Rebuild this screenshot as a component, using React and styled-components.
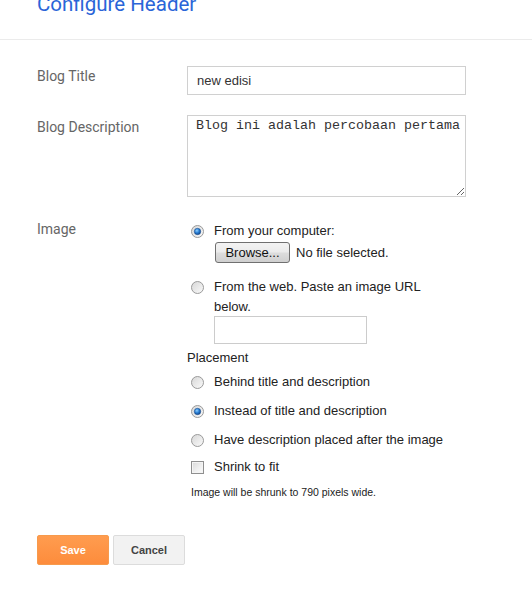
import React from "react";
import styled, { createGlobalStyle } from "styled-components";

const GlobalStyle = createGlobalStyle`
  html, body {
    margin: 0;
    padding: 0;
    background: #ffffff;
  }
  body {
    font-family: "Liberation Sans", Arial, sans-serif;
    overflow: hidden;
  }
`;

const Radio = ({ checked }) => (
  <RadioSvg width="13" height="13" viewBox="0 0 13 13">
    <defs>
      <linearGradient id={checked ? "rgOn" : "rgOff"} x1="0" y1="0" x2="1" y2="1">
        <stop offset="0" stopColor="#d6d6d6" />
        <stop offset="1" stopColor="#fbfbfb" />
      </linearGradient>
      <radialGradient id="dot" cx="0.4" cy="0.35" r="0.7">
        <stop offset="0" stopColor="#8fd0ff" />
        <stop offset="0.5" stopColor="#2a7fd4" />
        <stop offset="1" stopColor="#0b3f86" />
      </radialGradient>
    </defs>
    <circle cx="6.5" cy="6.5" r="6" fill={`url(#${checked ? "rgOn" : "rgOff"})`} stroke="#9a9a9a" strokeWidth="1" />
    {checked && <circle cx="6.5" cy="6.5" r="3.2" fill="url(#dot)" stroke="#1c4f8f" strokeWidth="0.6" />}
  </RadioSvg>
);

export default function App() {
  return (
    <Page>
      <GlobalStyle />
      <Header>
        <Title>Configure Header</Title>
      </Header>

      <Row $top={26}>
        <Label $pad={2}>Blog Title</Label>
        <TextInput defaultValue="new edisi" />
      </Row>

      <Row $top={20}>
        <Label $pad={4}>Blog Description</Label>
        <TextArea defaultValue="Blog ini adalah percobaan pertama" />
      </Row>

      <Row $top={24}>
        <Label $pad={0}>Image</Label>
        <Options>
          <Option>
            <Radio checked />
            <OptionText>From your computer:</OptionText>
          </Option>
          <FileRow>
            <BrowseButton>Browse...</BrowseButton>
            <span>No file selected.</span>
          </FileRow>
          <Option $top={14}>
            <Radio />
            <OptionText $wrap>From the web. Paste an image URL below.</OptionText>
          </Option>
          <UrlInput />
          <Placement>Placement</Placement>
          <Option $top={5}>
            <Radio />
            <OptionText>Behind title and description</OptionText>
          </Option>
          <Option $top={9}>
            <Radio checked />
            <OptionText>Instead of title and description</OptionText>
          </Option>
          <Option $top={9}>
            <Radio />
            <OptionText>Have description placed after the image</OptionText>
          </Option>
          <Option $top={7}>
            <Checkbox />
            <OptionText>Shrink to fit</OptionText>
          </Option>
          <Note>Image will be shrunk to 790 pixels wide.</Note>
        </Options>
      </Row>

      <Actions>
        <SaveButton>Save</SaveButton>
        <CancelButton>Cancel</CancelButton>
      </Actions>
    </Page>
  );
}

const Page = styled.div`
  width: 532px;
  height: 594px;
  background: #ffffff;
`;

const Header = styled.div`
  display: flow-root;
  height: 39px;
  padding: 0 37px;
  border-bottom: 1px solid #ebebeb;
`;

const Title = styled.h2`
  margin: -8px 0 0;
  font-family: Roboto, "Liberation Sans", sans-serif;
  font-weight: 400;
  font-size: 20.5px;
  line-height: 24px;
  color: #2a65d8;
`;

const Row = styled.div`
  display: grid;
  grid-template-columns: 150px 279px;
  padding-left: 37px;
  margin-top: ${(p) => p.$top}px;
`;

const Label = styled.div`
  font-family: Roboto, "Liberation Sans", sans-serif;
  font-size: 14px;
  line-height: 16px;
  color: #666666;
  padding-top: ${(p) => p.$pad}px;
`;

const TextInput = styled.input`
  box-sizing: border-box;
  width: 279px;
  height: 29px;
  margin: 0;
  padding: 0 9px;
  border: 1px solid #d0d0d0;
  border-radius: 0;
  font-family: "Liberation Sans", Arial, sans-serif;
  font-size: 13px;
  color: #333333;
  outline: none;
`;

const TextArea = styled.textarea`
  box-sizing: border-box;
  display: block;
  width: 279px;
  height: 82px;
  margin: 0;
  padding: 2px 2px 2px 8px;
  border: 1px solid #d0d0d0;
  border-radius: 0;
  font-family: "Liberation Mono", "Courier New", monospace;
  font-size: 13.33px;
  line-height: 16px;
  color: #333333;
  resize: both;
  outline: none;
  overflow: hidden;
`;

const Options = styled.div`
  display: flex;
  flex-direction: column;
  font-size: 13px;
  color: #222222;
`;

const Option = styled.div`
  display: flex;
  align-items: flex-start;
  gap: 10px;
  padding-left: 4px;
  line-height: 20px;
  margin-top: ${(p) => p.$top || 0}px;
`;

const RadioSvg = styled.svg`
  flex: none;
  display: block;
  margin-top: 4px;
`;

const Checkbox = styled.span`
  flex: none;
  box-sizing: border-box;
  width: 13px;
  height: 13px;
  margin-top: 4px;
  border: 1px solid #8f8f8f;
  background: linear-gradient(135deg, #d8d8d8 0%, #f0f0f0 60%, #fbfbfb 100%);
  box-shadow: inset 0 0 0 1px #f4f4f4;
`;

const OptionText = styled.span`
  max-width: ${(p) => (p.$wrap ? "225px" : "none")};
  white-space: ${(p) => (p.$wrap ? "normal" : "nowrap")};
`;

const FileRow = styled.div`
  display: flex;
  align-items: center;
  gap: 6px;
  padding-left: 28px;
  margin-top: 1px;
  line-height: 21px;
`;

const BrowseButton = styled.button`
  box-sizing: border-box;
  width: 75px;
  height: 21px;
  padding: 0;
  border: 1px solid #707070;
  border-radius: 3px;
  background: linear-gradient(#f3f3f3 0%, #ebebeb 48%, #dddddd 52%, #cfcfcf 100%);
  font-family: "Liberation Sans", Arial, sans-serif;
  font-size: 13px;
  color: #111111;
`;

const UrlInput = styled.input`
  box-sizing: border-box;
  width: 153px;
  height: 28px;
  margin: -1px 0 0 27px;
  padding: 0 6px;
  border: 1px solid #cccccc;
  border-radius: 0;
  outline: none;
`;

const Placement = styled.div`
  margin-top: 5px;
  line-height: 18px;
`;

const Note = styled.div`
  margin-top: 8px;
  padding-left: 4px;
  font-size: 10.5px;
  line-height: 14px;
  color: #222222;
`;

const Actions = styled.div`
  display: flex;
  gap: 4px;
  padding-left: 37px;
  margin-top: 36px;
`;

const BaseButton = styled.button`
  box-sizing: border-box;
  width: 72px;
  height: 30px;
  padding: 0;
  border-radius: 2px;
  font-family: "Liberation Sans", Arial, sans-serif;
  font-size: 11px;
  font-weight: 700;
`;

const SaveButton = styled(BaseButton)`
  border: 1px solid #f79a4c;
  background: linear-gradient(#ff9c4f, #fd8c3c);
  color: #ffffff;
`;

const CancelButton = styled(BaseButton)`
  border: 1px solid #dcdcdc;
  background: #f2f2f2;
  color: #444444;
`;
